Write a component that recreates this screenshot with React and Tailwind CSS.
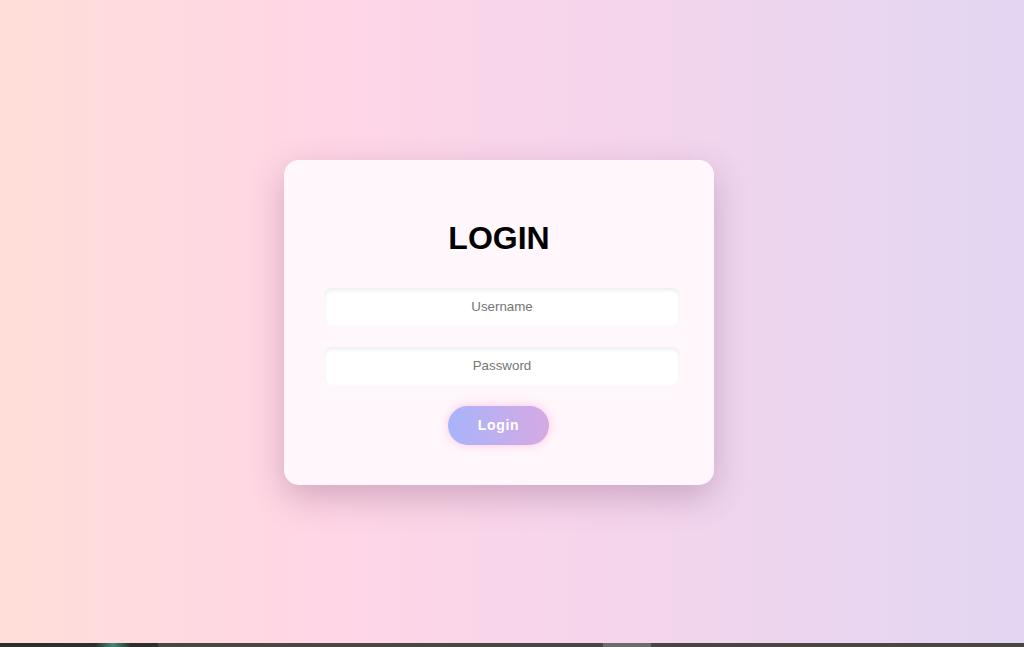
export default function App() {
  return (
    <div className="flex h-[647px] w-[1024px] flex-col overflow-hidden font-['Liberation_Sans',Arial,sans-serif]">
      <main className="flex h-[643px] items-center justify-center bg-[linear-gradient(to_right,#ffded9_0%,#ffd6e6_32%,#f5d5ec_60%,#e2d6f2_100%)] pr-[26px] pt-[1px]">
        <div className="flex w-[430px] flex-col items-center rounded-[15px] bg-[#fff7fb] px-10 pb-10 pt-10 shadow-[0_12px_34px_rgba(110,60,100,0.3)]">
          <h1 className="mt-[20px] mb-[31px] text-[32px] font-bold leading-[37px] text-black">
            LOGIN
          </h1>
          <input
            type="text"
            placeholder="Username"
            className="mb-[21px] ml-[6px] h-[38px] w-[356px] shrink-0 rounded-[8px] bg-white text-center text-[13.33px] text-[#333] shadow-[inset_0_2px_4px_rgba(0,0,0,0.08)] outline-none placeholder:text-[#757575]"
          />
          <input
            type="password"
            placeholder="Password"
            className="mb-[21px] ml-[6px] h-[38px] w-[356px] shrink-0 rounded-[8px] bg-white text-center text-[13.33px] text-[#333] shadow-[inset_0_2px_4px_rgba(0,0,0,0.08)] outline-none placeholder:text-[#757575]"
          />
          <button
            type="button"
            className="mr-[1px] h-[39px] w-[101px] rounded-full bg-[linear-gradient(to_right,#a8b4fb,#d6a9e3)] text-[14px] font-bold tracking-[0.7px] text-white shadow-[0_0_10px_rgba(255,150,210,0.55)]"
          >
            Login
          </button>
        </div>
      </main>
      {/* taskbar edge peeking in at the bottom */}
      <div className="flex h-[4px] shrink-0">
        <div className="relative w-[158px] bg-[#2e2e2e]">
          <div className="absolute left-[95px] top-0 h-[4px] w-[36px] bg-[linear-gradient(to_right,#2e2e2e,#3f8a78,#2e2e2e)]" />
        </div>
        <div className="w-[445px] bg-[#4a4641]" />
        <div className="w-[48px] bg-[#6e6c68]" />
        <div className="flex-1 bg-[#4a4641]" />
      </div>
    </div>
  )
}
